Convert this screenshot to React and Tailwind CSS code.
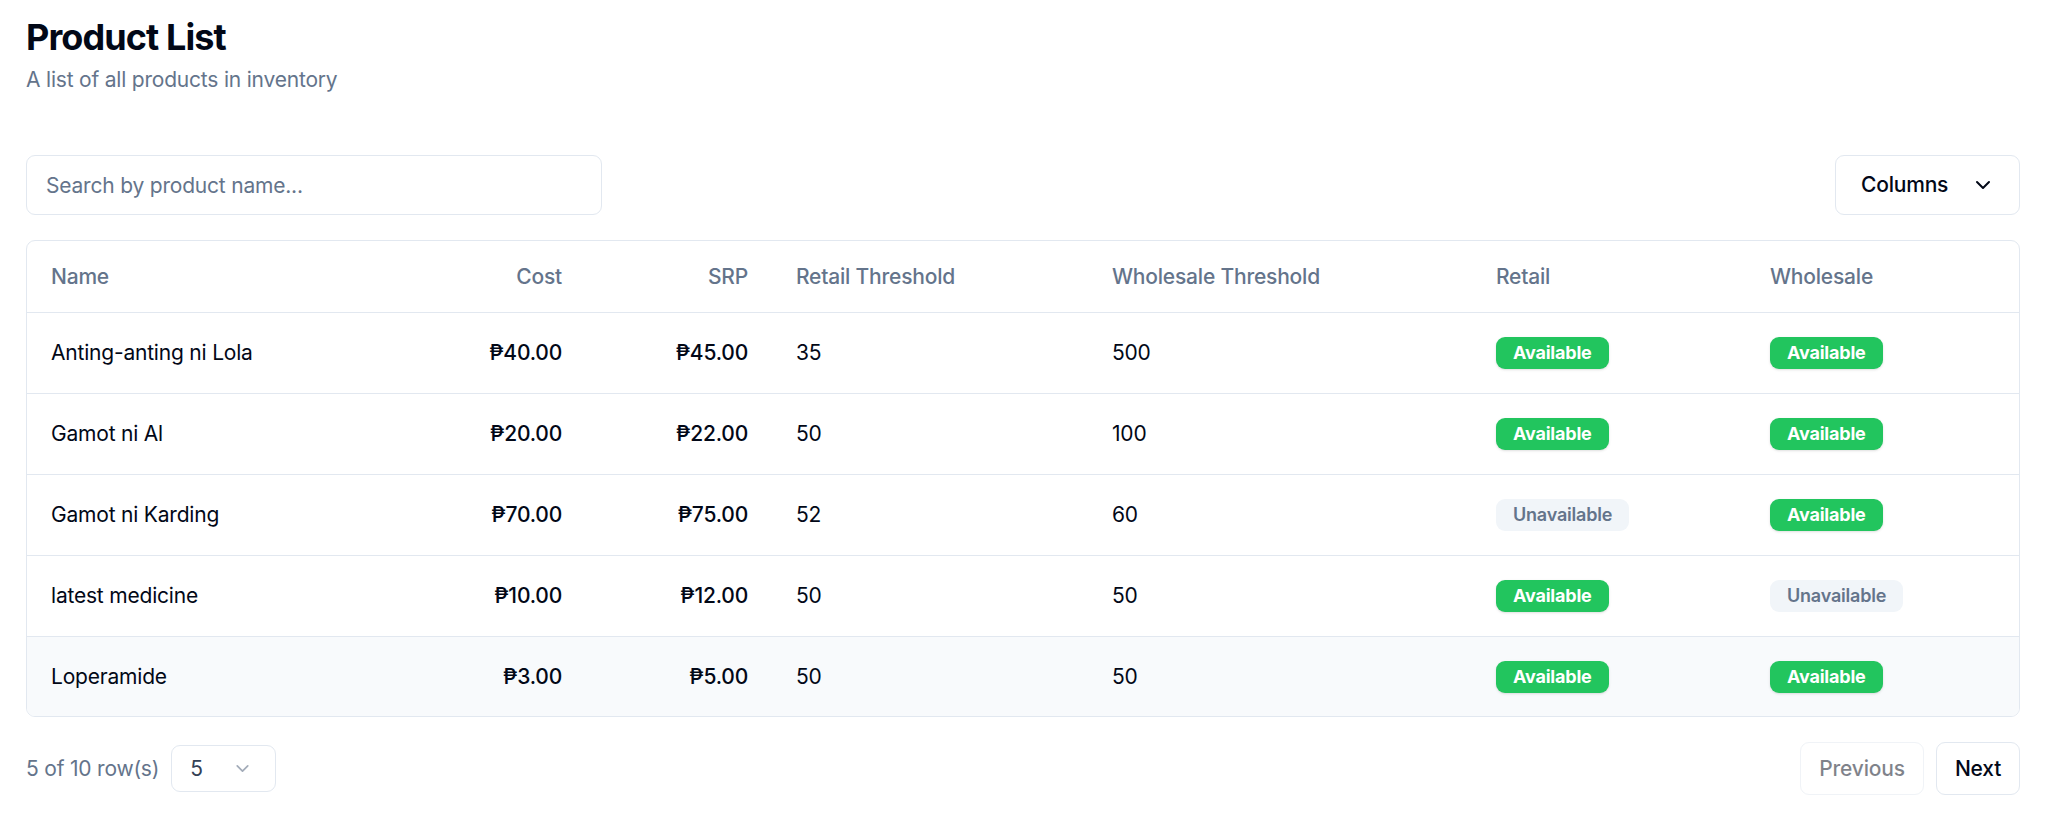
import React from "react";

const rows = [
  ["Anting-anting ni Lola", "₱40.00", "₱45.00", "35", "500", true, true],
  ["Gamot ni Al", "₱20.00", "₱22.00", "50", "100", true, true],
  ["Gamot ni Karding", "₱70.00", "₱75.00", "52", "60", false, true],
  ["latest medicine", "₱10.00", "₱12.00", "50", "50", true, false],
  ["Loperamide", "₱3.00", "₱5.00", "50", "50", true, true],
];

function Badge({ ok }) {
  return ok ? (
    <span className="inline-flex items-center rounded-[9px] bg-[#22c55e] px-[17px] py-[4px] text-[18px] leading-[24px] font-bold text-white shadow-sm">
      Available
    </span>
  ) : (
    <span className="inline-flex items-center rounded-[9px] bg-[#f1f5f9] px-[17px] py-[4px] text-[18px] leading-[24px] font-semibold text-[#64748b]">
      Unavailable
    </span>
  );
}

function Chevron({ className }) {
  return (
    <svg className={className} viewBox="0 0 24 24" fill="none" stroke="currentColor" strokeWidth="2" strokeLinecap="round" strokeLinejoin="round">
      <path d="m6 9 6 6 6-6" />
    </svg>
  );
}

export default function App() {
  return (
    <div className="min-h-screen bg-white px-[26px] pt-[13px] font-['Inter',sans-serif] text-[#020817] tracking-[-0.2px]">
      <h1 className="text-[36px] leading-[48px] font-bold tracking-tight">Product List</h1>
      <p className="mt-[4px] text-[21px] leading-[30px] text-[#64748b]">A list of all products in inventory</p>

      <div className="mt-[60px] flex items-center justify-between">
        <input
          className="h-[60px] w-[576px] rounded-[9px] border border-[#e2e8f0] px-[19px] text-[21px] placeholder:text-[#64748b] outline-none"
          placeholder="Search by product name..."
        />
        <button className="flex h-[60px] w-[185px] items-center justify-between rounded-[9px] border border-[#e2e8f0] pl-[25px] pr-[24px] text-[21px] font-medium">
          Columns
          <Chevron className="h-[24px] w-[24px]" />
        </button>
      </div>

      <div className="mt-[25px] overflow-hidden rounded-[9px] border border-[#e2e8f0]">
        <table className="w-full table-fixed border-collapse text-[21px]">
          <colgroup>
            <col className="w-[373px]" />
            <col className="w-[186px]" />
            <col className="w-[186px]" />
            <col className="w-[316px]" />
            <col className="w-[384px]" />
            <col className="w-[274px]" />
            <col />
          </colgroup>
          <thead>
            <tr className="h-[71px] border-b border-[#e2e8f0] text-[#64748b]">
              <th className="px-[24px] text-left font-medium">Name</th>
              <th className="px-[24px] text-right font-medium">Cost</th>
              <th className="px-[24px] text-right font-medium">SRP</th>
              <th className="px-[24px] text-left font-medium">Retail Threshold</th>
              <th className="px-[24px] text-left font-medium">Wholesale Threshold</th>
              <th className="px-[24px] text-left font-medium">Retail</th>
              <th className="px-[24px] text-left font-medium">Wholesale</th>
            </tr>
          </thead>
          <tbody>
            {rows.map((r, i) => (
              <tr
                key={i}
                className={
                  i === rows.length - 1
                    ? "h-[80px] bg-[#f8fafc]"
                    : "h-[81px] border-b border-[#e2e8f0]"
                }
              >
                <td className="px-[24px]">{r[0]}</td>
                <td className="px-[24px] text-right font-medium">{r[1]}</td>
                <td className="px-[24px] text-right font-medium">{r[2]}</td>
                <td className="px-[24px]">{r[3]}</td>
                <td className="px-[24px]">{r[4]}</td>
                <td className="px-[24px]"><Badge ok={r[5]} /></td>
                <td className="px-[24px]"><Badge ok={r[6]} /></td>
              </tr>
            ))}
          </tbody>
        </table>
      </div>

      <div className="flex items-center justify-between pt-[25px]">
        <div className="flex items-center gap-[12px]">
          <span className="text-[21px] text-[#64748b]">5 of 10 row(s)</span>
          <div className="flex h-[47px] w-[105px] items-center justify-between rounded-[9px] border border-[#e2e8f0] pl-[18px] pr-[22px] text-[21px]">
            <span className="text-[#334155]">5</span>
            <Chevron className="h-[21px] w-[21px] text-[#a3acb9]" />
          </div>
        </div>
        <div className="flex items-center gap-[12px]">
          <button className="h-[53px] w-[124px] rounded-[9px] border border-[#e2e8f0] text-[21px] font-medium text-[#020817] opacity-50">
            Previous
          </button>
          <button className="h-[53px] w-[84px] rounded-[9px] border border-[#e2e8f0] text-[21px] font-medium">
            Next
          </button>
        </div>
      </div>
    </div>
  );
}
